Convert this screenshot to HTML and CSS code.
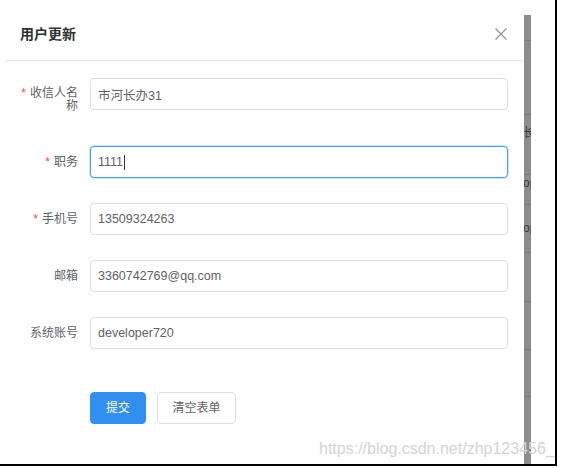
FILE: index.html
```html
<!DOCTYPE html>
<html lang="zh-CN">
<head>
<meta charset="utf-8">
<title>用户更新</title>
<link rel="stylesheet" href="styles.css">
</head>
<body>
<div class="screen">
  <div class="frame">
    <div class="dialog">
      <div class="header">
        <span class="title">用户更新</span>
        <button class="close" type="button" aria-label="关闭">
          <svg width="12" height="12" viewBox="0 0 12 12"><path d="M0.5 0.5 L11.5 11.5 M11.5 0.5 L0.5 11.5" stroke="#909399" stroke-width="1.1" fill="none"/></svg>
        </button>
      </div>
      <div class="divider"></div>
      <form class="form">
        <div class="item item-tall">
          <label class="label label-wrap"><span class="req">*</span>收信人名<br>称</label>
          <div class="input">市河长办31</div>
        </div>
        <div class="item">
          <label class="label"><span class="req">*</span>职务</label>
          <div class="input input-focus">1111<span class="caret"></span></div>
        </div>
        <div class="item">
          <label class="label"><span class="req">*</span>手机号</label>
          <div class="input">13509324263</div>
        </div>
        <div class="item">
          <label class="label">邮箱</label>
          <div class="input">3360742769@qq.com</div>
        </div>
        <div class="item item-last">
          <label class="label">系统账号</label>
          <div class="input">developer720</div>
        </div>
        <div class="actions">
          <button class="btn btn-primary" type="button">提交</button>
          <button class="btn btn-default" type="button">清空表单</button>
        </div>
      </form>
    </div>
    <div class="scrollbar">
      <div class="bar-row h26"></div>
      <div class="bar-row h74"></div>
      <div class="bar-row h60"><span class="frag frag-a">长</span></div>
      <div class="bar-row h30"><span class="frag frag-b">op</span></div>
      <div class="bar-row h48"><span class="frag frag-c">op</span></div>
      <div class="bar-row h49"></div>
      <div class="bar-row h48"></div>
      <div class="bar-row h47"></div>
    </div>
  </div>
  <div class="watermark">https://blog.csdn.net/zhp123456_</div>
</div>
</body>
</html>
```
FILE: styles.css
```css
* {
  box-sizing: border-box;
}

body {
  margin: 0;
  background: #fff;
  font-family: "Liberation Sans", "Noto Sans CJK SC", sans-serif;
}

.screen {
  position: relative;
  width: 561px;
  height: 468px;
  overflow: hidden;
  background: #fff;
}

.frame {
  display: flex;
  width: 557px;
  height: 466px;
  border-right: 2px solid #000;
  border-bottom: 2px solid #000;
}

.dialog {
  width: 524px;
  flex: none;
  display: flex;
  flex-direction: column;
}

.header {
  height: 60px;
  padding: 8px 17px 0 20px;
  display: flex;
  align-items: center;
  justify-content: space-between;
}

.title {
  font-size: 14px;
  font-weight: 700;
  line-height: 20px;
  color: #303133;
}

.close {
  width: 12px;
  height: 12px;
  padding: 0;
  border: 0;
  background: none;
  display: flex;
}

.divider {
  height: 1px;
  margin-left: 6px;
  background: #e4e7ed;
}

.form {
  padding: 17px 16px 0 0;
}

.item {
  display: flex;
  align-items: center;
  margin-bottom: 25px;
}

.item-tall {
  align-items: flex-start;
  margin-bottom: 33px;
}

.item-last {
  margin-bottom: 43px;
}

.label {
  flex: none;
  width: 90px;
  padding-right: 12px;
  text-align: right;
  font-size: 12px;
  line-height: 14px;
  color: #606266;
}

.label-wrap {
  padding-top: 9px;
  line-height: 13px;
}

.req {
  color: #f04b4b;
  margin-right: 4px;
}

.input {
  flex: 1;
  height: 32px;
  padding: 0 7px;
  border: 1px solid #dcdfe6;
  border-radius: 4px;
  display: flex;
  align-items: center;
  font-size: 12.5px;
  color: #606266;
  background: #fff;
}

.input-focus {
  border-color: #409eff;
  box-shadow: 0 0 0 1px rgba(64, 158, 255, 0.25);
}

.caret {
  display: inline-block;
  width: 1px;
  height: 15px;
  margin-left: 1px;
  background: #303133;
}

.actions {
  display: flex;
  gap: 11px;
  padding-left: 90px;
}

.btn {
  height: 32px;
  border-radius: 4px;
  font-family: inherit;
  font-size: 12px;
  line-height: 14px;
  cursor: pointer;
}

.btn-primary {
  width: 56px;
  border: 1px solid #318ff0;
  background: #318ff0;
  color: #fff;
}

.btn-default {
  width: 79px;
  border: 1px solid #dcdfe6;
  background: #fff;
  color: #606266;
}

.scrollbar {
  width: 7px;
  flex: none;
  margin-top: 15px;
  background: #8c8c8c;
  display: flex;
  flex-direction: column;
  overflow: hidden;
}

.bar-row {
  flex: none;
  border-bottom: 1px solid #7e7e7e;
  display: flex;
  align-items: flex-start;
  overflow: hidden;
}

.h26 { height: 26px; }
.h74 { height: 74px; }
.h60 { height: 60px; }
.h30 { height: 30px; }
.h48 { height: 48px; }
.h49 { height: 49px; }
.h47 { height: 47px; }

.frag {
  font-size: 12px;
  line-height: 14px;
  color: #3a3a3a;
  white-space: nowrap;
  margin-left: -1px;
}

.frag-a {
  margin-top: 11px;
}

.frag-b {
  margin-top: 1px;
}

.frag-c {
  margin-top: 16px;
}

.watermark {
  position: absolute;
  left: 319px;
  top: 440px;
  font-size: 16px;
  line-height: 18px;
  color: #d4d4d4;
  white-space: nowrap;
}
```
